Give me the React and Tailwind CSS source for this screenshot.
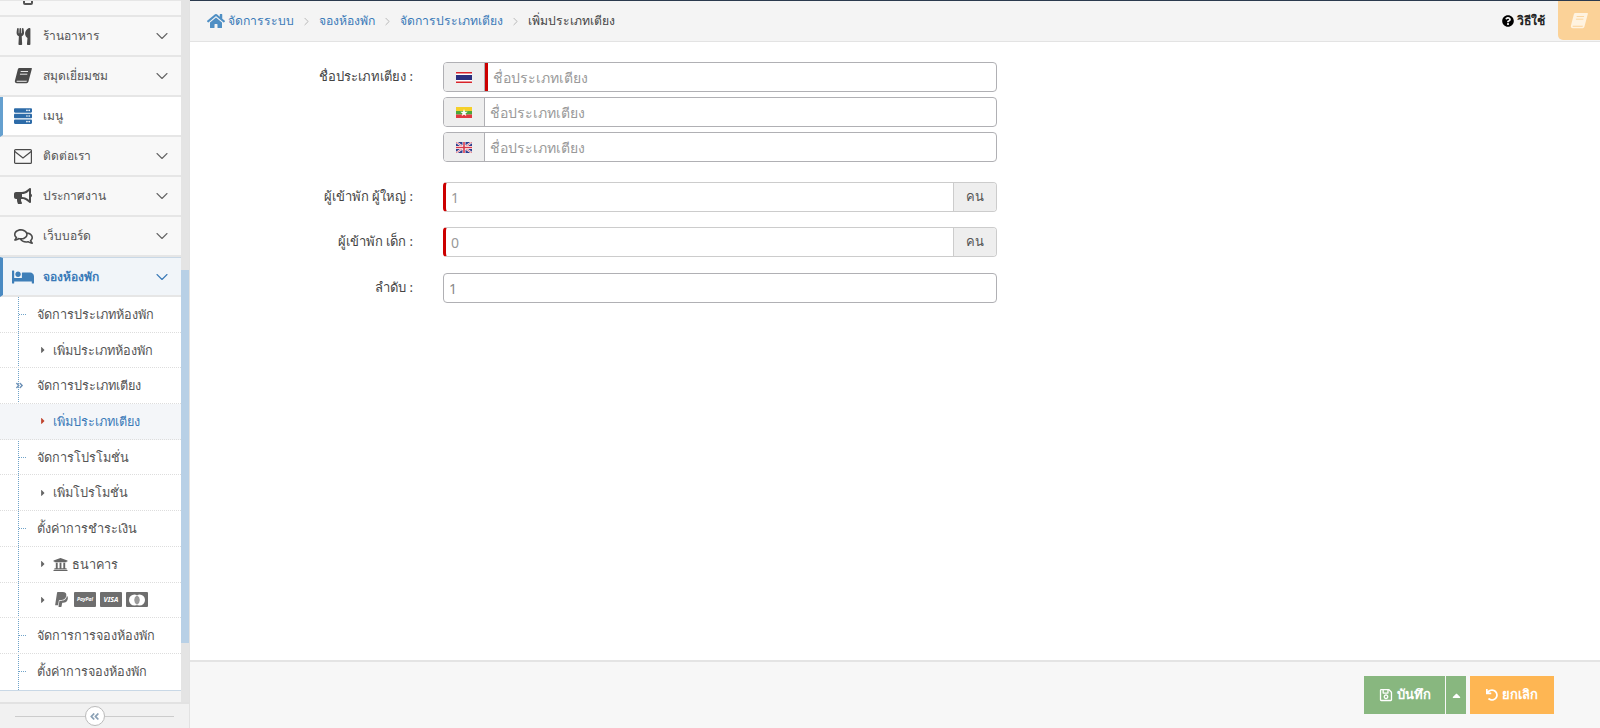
import { ChevronDown, ChevronRight } from 'lucide-react'
import {
  FaUtensils, FaServer, FaBullhorn, FaRegComments, FaBed, FaHome,
  FaUniversity, FaPaypal, FaQuestionCircle, FaRegSave, FaUndo, FaAngleDoubleLeft, FaAngleDoubleRight, FaCaretRight, FaCaretUp,
} from 'react-icons/fa'

const FONT = 'font-["Noto_Sans","Liberation_Sans",sans-serif]'

// tilted book, the font-awesome one in the package stands upright
function TiltedBook({ size = 18, page = '#fff' }) {
  return (
    <svg width={size} height={size} viewBox="0 0 20 20" fill="currentColor">
      <path d="M6 1h13c.8 0 1 .6.8 1.3L16 16.5c-.3 1-1 1.5-2 1.5H3.2C1.6 18 .6 16.8 1 15.2L4.3 2.6C4.5 1.6 5.1 1 6 1z" />
      <path d="M3.2 15.2h11.2l-.5 1.3H3.4c-.6 0-.6-1.3-.2-1.3z" fill={page} />
      <path d="M7.4 5h8.2M6.6 8h8.2" stroke={page} strokeWidth="1" />
    </svg>
  )
}

function Envelope() {
  return (
    <svg width="18" height="15" viewBox="0 0 18 15" fill="none" stroke="currentColor" strokeWidth="1.2">
      <rect x=".6" y=".6" width="16.8" height="13.8" rx="1" />
      <path d="M.8 2.5L9 9l8.2-6.5" />
    </svg>
  )
}

const MENU = [
  { label: 'ร้านอาหาร', icon: <FaUtensils size={17} />, more: true },
  { label: 'สมุดเยี่ยมชม', icon: <TiltedBook page="#f8f8f8" />, more: true },
  { label: 'เมนู', icon: <FaServer size={18} className="text-[#2d6ba8]" />, white: true },
  { label: 'ติดต่อเรา', icon: <Envelope />, more: true },
  { label: 'ประกาศงาน', icon: <FaBullhorn size={18} />, more: true },
  { label: 'เว็บบอร์ด', icon: <FaRegComments size={19} />, more: true },
]

const SUB = [
  { label: 'จัดการประเภทห้องพัก' },
  { label: 'เพิ่มประเภทห้องพัก', child: true },
  { label: 'จัดการประเภทเตียง', here: true },
  { label: 'เพิ่มประเภทเตียง', child: true, active: true },
  { label: 'จัดการโปรโมชั่น' },
  { label: 'เพิ่มโปรโมชั่น', child: true },
  { label: 'ตั้งค่าการชำระเงิน' },
  { label: 'ธนาคาร', child: true, bank: true },
  { child: true, pay: true },
  { label: 'จัดการการจองห้องพัก' },
  { label: 'ตั้งค่าการจองห้องพัก', last: true },
]

function ThaiFlag() {
  return (
    <svg width="16" height="11" viewBox="0 0 16 11">
      <rect width="16" height="11" fill="#fff" />
      <rect width="16" height="1.5" fill="#d8232a" />
      <rect y="9.5" width="16" height="1.5" fill="#d8232a" />
      <rect y="3" width="16" height="5" fill="#2b2f7f" />
    </svg>
  )
}

function MyanmarFlag() {
  return (
    <svg width="16" height="11" viewBox="0 0 16 11">
      <rect width="16" height="4" fill="#f5d02a" />
      <rect y="4" width="16" height="3.5" fill="#4da63c" />
      <rect y="7.5" width="16" height="3.5" fill="#e2383f" />
      <polygon points="8,2 9,4.8 11.8,4.8 9.5,6.5 10.4,9.2 8,7.5 5.6,9.2 6.5,6.5 4.2,4.8 7,4.8" fill="#fff" />
    </svg>
  )
}

function UkFlag() {
  return (
    <svg width="16" height="11" viewBox="0 0 16 11">
      <rect width="16" height="11" fill="#2f3f8f" />
      <path d="M0 0L16 11M16 0L0 11" stroke="#fff" strokeWidth="2" />
      <path d="M0 0L16 11M16 0L0 11" stroke="#d8384a" strokeWidth="0.7" />
      <path d="M8 0V11M0 5.5H16" stroke="#fff" strokeWidth="3" />
      <path d="M8 0V11M0 5.5H16" stroke="#d8384a" strokeWidth="1.6" />
    </svg>
  )
}

function Card({ children, className }) {
  return (
    <span className={`flex h-[15px] w-[22px] items-center justify-center rounded-[1px] bg-[#6e6e6e] font-bold italic leading-none text-white ${className}`}>
      {children}
    </span>
  )
}

function SideRow({ item }) {
  return (
    <div className={`flex h-10 shrink-0 items-center border-b-2 border-[#e6e6e6] pr-[9px] ${item.white ? 'border-l-[3px] border-l-[#65a0cf] bg-white pl-[5px]' : 'bg-[#f8f8f8] pl-[8px]'}`}>
      <span className="flex w-[30px] justify-center text-[#4a4a4a]">{item.icon}</span>
      <span className="ml-[5px] flex-1 text-[12px] text-[#555]">{item.label}</span>
      {item.more && <ChevronDown size={20} strokeWidth={1.3} className="text-[#666]" />}
    </div>
  )
}

function SubRow({ item }) {
  return (
    <div className={`relative flex h-[35.7px] shrink-0 items-center border-b border-dotted border-[#ddd] text-[12.7px] ${item.active ? 'bg-[#f4f6f9] text-[#3a7ab8]' : 'text-[#555]'} ${item.child ? 'pl-[38px]' : 'pl-[37px]'} ${item.last ? 'border-b-0' : ''}`}>
      {item.here
        ? <FaAngleDoubleRight size={9} className="absolute left-[15px] text-[#6b8fb5]" />
        : !item.child && <span className="absolute left-[19px] w-[7px] border-t border-dotted border-[#6fa3c9]" />}
      {item.child && <FaCaretRight size={10} className={`mr-[5px] ${item.active ? 'text-[#c0452f]' : 'text-[#666]'}`} />}
      {item.bank && <FaUniversity size={15} className="mr-[4px] text-[#666]" />}
      {item.pay
        ? (
          <span className="flex items-center gap-[4px]">
            <FaPaypal size={17} className="text-[#6e6e6e]" />
            <Card className="text-[5px]">PayPal</Card>
            <Card className="text-[7px]">VISA</Card>
            <Card>
              <svg width="18" height="12" viewBox="0 0 18 12">
                <circle cx="6.5" cy="6" r="5.5" fill="#fff" />
                <circle cx="11.5" cy="6" r="5.5" fill="#fff" />
                <path d="M9 1.2a5.5 5.5 0 0 1 0 9.6a5.5 5.5 0 0 1 0-9.6" fill="#9a9a9a" />
              </svg>
            </Card>
          </span>
        )
        : item.label}
    </div>
  )
}

function Sidebar() {
  return (
    <aside className="flex w-[190px] shrink-0 flex-col border-r border-[#e2e2e2]">
      <div className="flex min-h-0 flex-1">
        <div className="flex w-[181px] shrink-0 flex-col overflow-hidden">
          <div className="h-[17px] shrink-0 overflow-hidden border-b-2 border-t border-[#e6e6e6] bg-[#f8f8f8] pl-[23px]">
            <div className="-mt-[12px] h-[16px] w-[10px] rounded-[2px] border-2 border-[#555]" />
          </div>
          {MENU.map(m => <SideRow key={m.label} item={m} />)}
          <div className="flex h-10 shrink-0 items-center border-b-2 border-l-[3px] border-t border-[#e6e6e6] border-l-[#4a8ac2] border-t-[#c9d8e6] bg-[#f1f5f9] pl-[5px] pr-[9px]">
            <span className="flex w-[30px] justify-center text-[#3f7fb8]"><FaBed size={22} /></span>
            <span className="ml-[5px] flex-1 text-[12px] font-bold text-[#3a7ab8]">จองห้องพัก</span>
            <ChevronDown size={20} strokeWidth={1.3} className="text-[#3a7ab8]" />
          </div>
          <div className="relative flex min-h-0 flex-col bg-white">
            <span className="absolute bottom-0 left-[18px] top-0 border-l border-dotted border-[#6fa3c9]" />
            {SUB.map((s, i) => <SubRow key={i} item={s} />)}
          </div>
          <div className="flex-1 border-t border-[#c9d8e6] bg-[#f4f4f4]" />
        </div>
        <div className="w-[8px] bg-[#e4e4e4] pt-[270px]">
          <div className="h-[373px] bg-[#b8d0e6]" />
        </div>
      </div>
      <div className="flex h-[26px] shrink-0 items-center border-t-2 border-[#e2e2e2] bg-[#f1f1f1] px-[15px]">
        <span className="flex-1 border-t border-[#ccc]" />
        <span className="flex h-5 w-5 items-center justify-center rounded-full border border-[#bbb] bg-white text-[#8aa0b5]">
          <FaAngleDoubleLeft size={11} />
        </span>
        <span className="flex-1 border-t border-[#ccc]" />
      </div>
    </aside>
  )
}

function Crumb({ children }) {
  return (
    <>
      <span className="text-[#3a7ab8]">{children}</span>
      <ChevronRight size={13} strokeWidth={1.5} className="mx-[6px] text-[#aaa]" />
    </>
  )
}

function Label({ children }) {
  return <label className="block w-[223px] shrink-0 text-right text-[13px] text-[#444]">{children} :</label>
}

function FlagInput({ flag, required }) {
  return (
    <div className="flex h-[30px] w-[554px] overflow-hidden rounded-[4px] border border-[#b0b0b4] bg-white">
      <span className="flex w-[41px] shrink-0 items-center justify-center border-r border-[#b0b0b4] bg-[#eee]">{flag}</span>
      {required && <span className="w-[3px] shrink-0 bg-[#cc0000]" />}
      <input placeholder="ชื่อประเภทเตียง" className="min-w-0 flex-1 px-[5px] text-[14px] placeholder:text-[#999] focus:outline-none" />
    </div>
  )
}

function UnitInput({ value }) {
  return (
    <div className="flex h-[30px] w-[554px] overflow-hidden rounded-[4px] border border-[#ccc] border-l-[3px] border-l-[#cc0000] bg-white">
      <input placeholder={value} className="min-w-0 flex-1 px-[5px] text-[14px] placeholder:text-[#999] focus:outline-none" />
      <span className="flex w-[43px] shrink-0 items-center justify-center border-l border-[#ccc] bg-[#eee] text-[13px] text-[#555]">คน</span>
    </div>
  )
}

export default function App() {
  return (
    <div className={`flex h-[728px] w-[1600px] overflow-hidden bg-white ${FONT}`}>
      <Sidebar />
      <main className="flex min-w-0 flex-1 flex-col border-t border-[#2b3a4e]">
        <div className="flex h-[41px] shrink-0 items-center border-b border-[#e3e3e3] bg-[#f4f4f4] pl-[17px] text-[12.2px]">
          <FaHome size={18} className="mr-[3px] text-[#4f8fc4]" />
          <Crumb>จัดการระบบ</Crumb>
          <Crumb>จองห้องพัก</Crumb>
          <Crumb>จัดการประเภทเตียง</Crumb>
          <span className="text-[#444]">เพิ่มประเภทเตียง</span>
          <span className="ml-auto flex items-center gap-[3px] font-bold text-[#222]">
            <FaQuestionCircle size={12} className="text-black" /> วิธีใช้
          </span>
          <span className="ml-[13px] flex h-[39px] w-[42px] items-center justify-center self-start rounded-bl-[5px] bg-[#fbd298] text-[#fff3e0]">
            <TiltedBook size={18} page="#fbd298" />
          </span>
        </div>

        <div className="flex flex-1 flex-col pt-[20px]">
          <div className="flex">
            <div className="pt-[5px]"><Label>ชื่อประเภทเตียง</Label></div>
            <div className="ml-[30px] flex flex-col gap-[5px]">
              <FlagInput flag={<ThaiFlag />} required />
              <FlagInput flag={<MyanmarFlag />} />
              <FlagInput flag={<UkFlag />} />
            </div>
          </div>
          <div className="mt-[20px] flex items-center">
            <Label>ผู้เข้าพัก ผู้ใหญ่</Label>
            <div className="ml-[30px]"><UnitInput value="1" /></div>
          </div>
          <div className="mt-[15px] flex items-center">
            <Label>ผู้เข้าพัก เด็ก</Label>
            <div className="ml-[30px]"><UnitInput value="0" /></div>
          </div>
          <div className="mt-[16px] flex items-center">
            <Label>ลำดับ</Label>
            <div className="ml-[30px] h-[30px] w-[554px] overflow-hidden rounded-[4px] border border-[#b0b0b4]">
              <input placeholder="1" className="h-full w-full px-[5px] text-[14px] placeholder:text-[#888] focus:outline-none" />
            </div>
          </div>
        </div>

        <div className="flex h-[68px] shrink-0 items-start justify-end border-t-2 border-[#e4e4e4] bg-[#f7f7f7] pr-[46px] pt-[14px] text-[13px] font-bold text-white">
          <button className="flex h-[38px] w-[81px] items-center justify-center gap-[4px] bg-[#88b77f]">
            <FaRegSave size={14} /> บันทึก
          </button>
          <button className="ml-[1px] flex h-[38px] w-[20px] items-center justify-center bg-[#88b77f]">
            <FaCaretUp size={13} />
          </button>
          <button className="ml-[4px] flex h-[38px] w-[84px] items-center justify-center gap-[4px] bg-[#feb653]">
            <FaUndo size={12} /> ยกเลิก
          </button>
        </div>
      </main>
    </div>
  )
}
